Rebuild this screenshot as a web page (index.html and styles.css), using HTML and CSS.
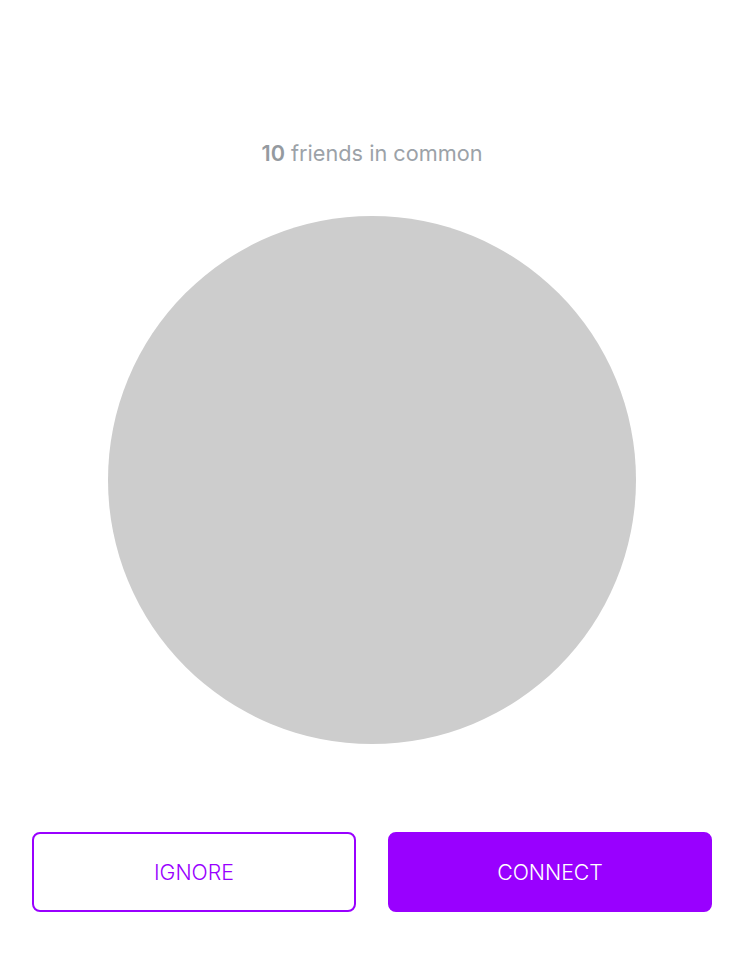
FILE: index.html
```html
<!DOCTYPE html>
<html>
<head>
<meta charset="utf-8">
<link rel="stylesheet" href="styles.css">
</head>
<body>
<main class="screen">
  <p class="common"><strong>10</strong> friends in common</p>
  <div class="avatar"></div>
  <div class="actions">
    <button class="btn btn-outline">IGNORE</button>
    <button class="btn btn-solid">CONNECT</button>
  </div>
</main>
</body>
</html>
```
FILE: styles.css
```css
html, body {
  margin: 0;
  padding: 0;
  background: #fff;
}
.screen {
  width: 744px;
  height: 960px;
  display: flex;
  flex-direction: column;
  align-items: center;
  font-family: Inter, "Noto Sans", sans-serif;
}
.common {
  margin: 140px 0 0;
  height: 26px;
  line-height: 26px;
  font-size: 21.7px;
  color: #9ca2a8;
  font-weight: 400;
}
.common strong {
  font-weight: 600;
  color: #949a9f;
}
.avatar {
  margin-top: 50px;
  width: 528px;
  height: 528px;
  border-radius: 50%;
  background: #cdcdcd;
}
.actions {
  margin-top: 88px;
  width: 100%;
  box-sizing: border-box;
  padding: 0 32px;
  display: flex;
  gap: 32px;
}
.btn {
  flex: 1;
  height: 80px;
  border-radius: 8px;
  font-family: Inter, "Noto Sans", sans-serif;
  font-size: 21.3px;
  font-weight: 300;
  box-sizing: border-box;
  cursor: pointer;
}
.btn-outline {
  background: #fff;
  border: 2px solid #9900ff;
  color: #9900ff;
}
.btn-solid {
  background: #9900ff;
  border: 2px solid #9900ff;
  color: #fff;
}
```
